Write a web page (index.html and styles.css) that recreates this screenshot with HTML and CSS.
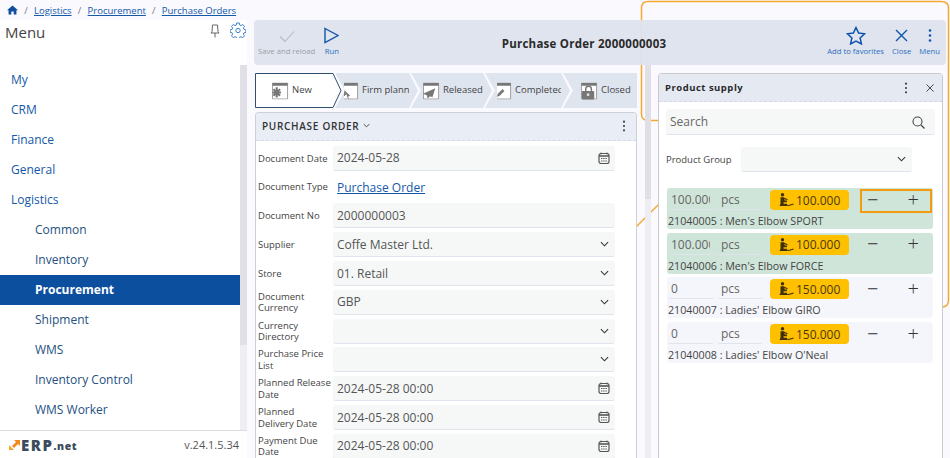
FILE: index.html
```html
<!DOCTYPE html>
<html lang="en">
<head>
  <meta charset="UTF-8" />
  <title>Purchase Order 2000000003</title>
  <link rel="stylesheet" href="styles.css">
</head>
<body>
  <svg class="sprite" xmlns="http://www.w3.org/2000/svg">
    <symbol id="i-cal" viewBox="0 0 12 12">
      <path d="M3 .5v2M9 .5v2" stroke="#555" fill="none"/>
      <rect x="1" y="1.5" width="10" height="10" rx="2" fill="none" stroke="#555" stroke-width="1.2"/>
      <path d="M1 4h10" stroke="#555" stroke-width="1.6"/>
      <path d="M3 6.5h6M3 9h6" stroke="#555" stroke-dasharray="1.4 .8"/>
    </symbol>
    <symbol id="i-down" viewBox="0 0 10 6">
      <path d="M1 1l4 4 4-4" fill="none" stroke="#333" stroke-width="1.2"/>
    </symbol>
    <symbol id="i-dots" viewBox="0 0 4 14">
      <circle cx="2" cy="2" r="1.3"/><circle cx="2" cy="7" r="1.3"/><circle cx="2" cy="12" r="1.3"/>
    </symbol>
    <symbol id="i-page" viewBox="0 0 18 18">
      <path d="M.5.5h16v17H.5z" fill="#fff" stroke="#999"/>
      <path d="M.5.5h16v3H.5z" fill="#777"/>
    </symbol>
    <symbol id="i-stock" viewBox="0 0 15 14">
      <circle cx="3.500" cy="1.800" r="1.700" fill="#3f3208"/>
      <path d="M1.500 4.200h3.600l.6 3.300h2.200v1.800H4.600v1.500h3.200l1 2.200H.5l1-2.200z" fill="#3f3208"/>
      <path d="M5 5.200l3.500 1.600M8.500 12.500c2 0 3-.5 6-1.500" fill="none" stroke="#3f3208" stroke-width="1.100"/>
    </symbol>
  </svg>

  <!-- callout drawn behind the panels -->
  <svg class="callout" viewBox="0 0 950 458" xmlns="http://www.w3.org/2000/svg">
    <path d="M660 120.500H648Q641.500 120.500 641.500 114V8Q641.500 1.500 648 1.500H941Q948.500 1.500 948.500 8V300Q948.500 307 942 307" fill="none" stroke="#f6a82f" stroke-width="1.500"/>
    <path d="M634 229L660 203" fill="none" stroke="#f6a82f" stroke-width="1.500"/>
  </svg>

  <div class="app">
    <div class="crumbs">
      <svg class="home" viewBox="0 0 12 10"><path d="M6 0L0 5.400h1.700V10h3V6.700h2.600V10h3V5.400H12z" fill="#0f4f9e"/></svg>
      <span class="sep">/</span><a href="#">Logistics</a>
      <span class="sep">/</span><a href="#">Procurement</a>
      <span class="sep">/</span><a href="#">Purchase Orders</a>
    </div>

    <div class="workspace">
      <aside class="sidebar">
        <div class="menu-head">
          <span class="menu-title">Menu</span>
          <svg class="pin" viewBox="0 0 10 14"><path d="M2.500 1h5l.5 6.500 1 1.500H1l1-1.500zM5 9v4.500" fill="none" stroke="#666"/></svg>
          <svg class="gear" viewBox="0 0 16 16"><path d="M6.700 1h2.600l.4 2 1.300.6 1.800-1.100 1.700 1.900-1.100 1.700.5 1.300 2 .5v2.500l-2 .5-.5 1.300 1.100 1.700-1.700 1.800-1.800-1-1.300.5-.4 2H6.700l-.4-2-1.300-.5-1.800 1-1.700-1.800 1.100-1.700-.5-1.300-2-.5V7.900l2-.5.500-1.300L1.500 4.400l1.700-1.900L5 3.600l1.300-.6z" fill="none" stroke="#2c76c4" stroke-width=".9"/><circle cx="8" cy="8.500" r="2.200" fill="none" stroke="#2c76c4" stroke-width=".9"/></svg>
        </div>
        <div class="menu-scroll">
          <nav class="menu">
            <a class="top" href="#">My</a>
            <a class="top" href="#">CRM</a>
            <a class="top" href="#">Finance</a>
            <a class="top" href="#">General</a>
            <a class="top" href="#">Logistics</a>
            <a href="#">Common</a>
            <a href="#">Inventory</a>
            <a class="active" href="#">Procurement</a>
            <a href="#">Shipment</a>
            <a href="#">WMS</a>
            <a href="#">Inventory Control</a>
            <a href="#">WMS Worker</a>
          </nav>
          <div class="menu-bar"><div class="menu-thumb"></div></div>
        </div>
        <div class="side-foot">
          <span class="logo">
            <svg viewBox="0 0 11 10"><path d="M5 0h6v6L9 4 5 8 3 6l4-4z" fill="#f08a1d"/><path d="M0 5l5 5H0z" fill="#f6a52e"/></svg>
            <b>ERP</b><b class="net">.net</b>
          </span>
          <span class="version">v.24.1.5.34</span>
        </div>
      </aside>

      <main class="main">
        <header class="toolbar">
          <div class="tools">
            <div class="tool off">
              <svg class="t-check" viewBox="0 0 16 12"><path d="M1 6l5 5L15 1" fill="none" stroke="#b4b9c2" stroke-width="1.100"/></svg>
              <span>Save and reload</span>
            </div>
            <div class="tool">
              <svg class="t-run" viewBox="0 0 15 16"><path d="M1 1l13 7-13 7z" fill="none" stroke="#0f55ad" stroke-width="1.400"/></svg>
              <span>Run</span>
            </div>
          </div>
          <h1 class="doc-title">Purchase Order 2000000003</h1>
          <div class="tools right">
            <div class="tool">
              <svg class="t-star" viewBox="0 0 20 19"><path d="M10 1.500l2.600 5.600 6 .7-4.500 4.100 1.300 6L10 15l-5.400 2.900 1.300-6L1.400 7.800l6-.7z" fill="none" stroke="#0f55ad" stroke-width="1.500"/></svg>
              <span>Add to favorites</span>
            </div>
            <div class="tool">
              <svg class="t-close" viewBox="0 0 13 13"><path d="M1 1l11 11M12 1L1 12" fill="none" stroke="#0f55ad" stroke-width="1.400"/></svg>
              <span>Close</span>
            </div>
            <div class="tool">
              <svg class="t-dots" viewBox="0 0 4 14" fill="#0f55ad"><use href="#i-dots"/></svg>
              <span>Menu</span>
            </div>
          </div>
        </header>

        <div class="content">
          <section class="doc">
            <div class="steps">
              <div class="step current">
                <svg class="step-edge" viewBox="0 0 87 35" preserveAspectRatio="none"><path d="M.5.500H78L86 17.500 78 34.500H.5z" fill="#fff" stroke="#2f4f70"/></svg>
                <span class="step-icon">
                  <svg viewBox="0 0 18 18"><use href="#i-page"/><path d="M5 5v11M.5 10.500h9M1.500 7l7 7M8.500 7l-7 7" stroke="#777" stroke-width="2.200"/></svg>
                </span>
                <span class="step-label">New</span>
              </div>
              <div class="step s2">
                <span class="step-icon small">
                  <svg viewBox="0 0 18 18"><use href="#i-page"/><path d="M2 8l6 6-2.500 .5L7 17M2 8l.5 6 2-2" fill="#777" stroke="#777"/></svg>
                </span>
                <span class="step-label">Firm planned</span>
              </div>
              <div class="step s3">
                <span class="step-icon">
                  <svg viewBox="0 0 18 18"><use href="#i-page"/><path d="M13 6L0 12l4 1.500L5 17l2.500-2.500 2.500 1z" fill="#777"/></svg>
                </span>
                <span class="step-label">Released</span>
              </div>
              <div class="step s4">
                <span class="step-icon small">
                  <svg viewBox="0 0 18 18"><use href="#i-page"/><path d="M2 15l1-3 5-5 2 2-5 5z" fill="#777"/></svg>
                </span>
                <span class="step-label">Completed</span>
              </div>
              <div class="step s5">
                <span class="step-icon">
                  <svg viewBox="0 0 18 18"><use href="#i-page"/><path d="M5 9V7a3 3 0 016 0v2" fill="none" stroke="#777" stroke-width="1.500"/><rect x="1" y="9" width="13" height="9" rx="1" fill="#777"/><circle cx="7.500" cy="13" r="1.500" fill="#ddd"/></svg>
                </span>
                <span class="step-label">Closed</span>
              </div>
            </div>

            <div class="card">
              <div class="card-head">
                <span class="card-title">PURCHASE ORDER</span>
                <svg class="card-caret" viewBox="0 0 10 6"><use href="#i-down"/></svg>
                <svg class="dots" viewBox="0 0 4 14"><use href="#i-dots"/></svg>
              </div>
              <div class="form">
                <div class="row"><label>Document Date</label><div class="field">2024-05-28<svg class="cal"><use href="#i-cal"/></svg></div></div>
                <div class="row"><label>Document Type</label><div class="plain"><a href="#">Purchase Order</a></div></div>
                <div class="row"><label>Document No</label><div class="field">2000000003</div></div>
                <div class="row"><label>Supplier</label><div class="field">Coffe Master Ltd.<svg class="caret"><use href="#i-down"/></svg></div></div>
                <div class="row"><label>Store</label><div class="field">01. Retail<svg class="caret"><use href="#i-down"/></svg></div></div>
                <div class="row"><label>Document Currency</label><div class="field">GBP<svg class="caret"><use href="#i-down"/></svg></div></div>
                <div class="row"><label>Currency Directory</label><div class="field"><svg class="caret"><use href="#i-down"/></svg></div></div>
                <div class="row"><label>Purchase Price List</label><div class="field"><svg class="caret"><use href="#i-down"/></svg></div></div>
                <div class="row"><label>Planned Release Date</label><div class="field">2024-05-28 00:00<svg class="cal"><use href="#i-cal"/></svg></div></div>
                <div class="row"><label>Planned<br>Delivery Date</label><div class="field">2024-05-28 00:00<svg class="cal"><use href="#i-cal"/></svg></div></div>
                <div class="row"><label>Payment Due Date</label><div class="field">2024-05-28 00:00<svg class="cal"><use href="#i-cal"/></svg></div></div>
              </div>
            </div>
          </section>

          <div class="splitter"><div class="splitter-thumb"></div></div>

          <section class="panel">
            <div class="panel-head">
              <span class="panel-title">Product supply</span>
              <svg class="dots" viewBox="0 0 4 14"><use href="#i-dots"/></svg>
              <svg class="panel-x" viewBox="0 0 9 9"><path d="M.5.500l8 8M8.500.5l-8 8" fill="none" stroke="#333"/></svg>
            </div>
            <div class="panel-body">
              <div class="search">
                <span>Search</span>
                <svg viewBox="0 0 13 13"><circle cx="5.500" cy="5.500" r="4.500" fill="none" stroke="#444" stroke-width="1.100"/><path d="M9 9l3.500 3.500" stroke="#444" stroke-width="1.300"/></svg>
              </div>
              <div class="group">
                <label>Product Group</label>
                <div class="group-select"><svg class="caret"><use href="#i-down"/></svg></div>
              </div>
              <div class="items">
                <div class="item added">
                  <div class="item-line">
                    <div class="qty"><span>100.000</span></div>
                    <div class="unit">pcs</div>
                    <div class="stock"><svg><use href="#i-stock"/></svg>100.000</div>
                    <div class="steppers marked"><span>&minus;</span><span>+</span></div>
                  </div>
                  <div class="item-name">21040005 : Men's Elbow SPORT</div>
                </div>
                <div class="item added">
                  <div class="item-line">
                    <div class="qty"><span>100.000</span></div>
                    <div class="unit">pcs</div>
                    <div class="stock"><svg><use href="#i-stock"/></svg>100.000</div>
                    <div class="steppers"><span>&minus;</span><span>+</span></div>
                  </div>
                  <div class="item-name">21040006 : Men's Elbow FORCE</div>
                </div>
                <div class="item">
                  <div class="item-line">
                    <div class="qty"><span>0</span></div>
                    <div class="unit">pcs</div>
                    <div class="stock"><svg><use href="#i-stock"/></svg>150.000</div>
                    <div class="steppers"><span>&minus;</span><span>+</span></div>
                  </div>
                  <div class="item-name">21040007 : Ladies' Elbow GIRO</div>
                </div>
                <div class="item">
                  <div class="item-line">
                    <div class="qty"><span>0</span></div>
                    <div class="unit">pcs</div>
                    <div class="stock"><svg><use href="#i-stock"/></svg>150.000</div>
                    <div class="steppers"><span>&minus;</span><span>+</span></div>
                  </div>
                  <div class="item-name">21040008 : Ladies' Elbow O'Neal</div>
                </div>
              </div>
            </div>
          </section>
        </div>
      </main>
    </div>
  </div>
</body>
</html>
```

FILE: styles.css
```css
* {
  box-sizing: border-box;
}
html, body {
  margin: 0;
  height: 100%;
}
body {
  width: 950px;
  height: 458px;
  overflow: hidden;
  position: relative;
  background: #f9f9fe;
  font-family: "Open Sans", "Liberation Sans", sans-serif;
  color: #444;
}
a {
  color: #1458a8;
}
.sprite {
  display: none;
}
.callout {
  position: absolute;
  top: 0;
  left: 0;
  width: 950px;
  height: 458px;
}
.app {
  position: relative;
  display: flex;
  flex-direction: column;
  height: 458px;
}

/* breadcrumb */
.crumbs {
  height: 20px;
  display: flex;
  align-items: center;
  padding-left: 7px;
  font-size: 9.500px;
}
.home {
  width: 11px;
  height: 10px;
}
.sep {
  color: #777;
  margin: 0 6.250px;
}

.workspace {
  flex: 1;
  display: flex;
  min-height: 0;
}

/* side menu */
.sidebar {
  width: 247px;
  background: #fff;
  display: flex;
  flex-direction: column;
  flex: none;
}
.menu-head {
  height: 45px;
  display: flex;
  align-items: flex-start;
  padding: 2px 1px 0 5px;
}
.menu-title {
  font-size: 15px;
  line-height: 20px;
  flex: 1;
  color: #444;
}
.pin {
  width: 10px;
  height: 14px;
  margin: 2px 10px 0 0;
}
.gear {
  width: 16px;
  height: 16px;
}
.menu-scroll {
  flex: 1;
  display: flex;
  min-height: 0;
  overflow: hidden;
}
.menu {
  flex: 1;
  display: flex;
  flex-direction: column;
}
.menu a {
  height: 30px;
  flex: none;
  padding-left: 35px;
  font-size: 12px;
  line-height: 29px;
  color: #24517f;
  text-decoration: none;
}
.menu a.top {
  padding-left: 11px;
  color: #1458a8;
}
.menu a.active {
  background: #0c4f9f;
  color: #fff;
  font-weight: 700;
}
.menu-bar {
  width: 7px;
  background: #eeeef3;
}
.menu-thumb {
  height: 280px;
  background: #e0e0e6;
}
.side-foot {
  height: 28px;
  flex: none;
  border-top: 1px solid #dedee2;
  display: flex;
  align-items: center;
  justify-content: space-between;
  padding: 0 8px 0 9px;
}
.logo {
  display: flex;
  align-items: center;
  color: #3a4b5c;
  font-size: 15px;
  line-height: 14px;
  font-weight: 800;
  letter-spacing: 1.500px;
}
.logo b {
  font-weight: 800;
}
.logo svg {
  width: 11px;
  height: 10px;
  margin-right: 1px;
}
.logo .net {
  font-size: 10.500px;
  letter-spacing: .6px;
  margin-top: 2px;
}
.version {
  font-size: 11px;
  color: #555;
}

/* document area */
.main {
  flex: 1;
  min-width: 0;
  padding: 0 4px 0 7px;
  display: flex;
  flex-direction: column;
}
.toolbar {
  height: 45px;
  flex: none;
  background: rgba(222, 227, 238, .95);
  border-radius: 4px;
  display: flex;
  align-items: flex-start;
  justify-content: space-between;
  padding: 6px 6px 0 4px;
  position: relative;
}
.tools {
  display: flex;
  gap: 9px;
  width: 170px;
}
.tools.right {
  justify-content: flex-end;
  gap: 8px;
  width: 200px;
}
.tool {
  display: flex;
  flex-direction: column;
  align-items: center;
  font-size: 7.700px;
  line-height: 10px;
  color: #2c6fbd;
  white-space: nowrap;
}
.tool svg {
  height: 19px;
  display: block;
  margin-bottom: 1px;
}
.tool.off {
  color: #9a9ea6;
}
.t-check {
  width: 16px;
  padding: 4px 0 2px;
}
.t-run {
  width: 15px;
}
.t-star {
  width: 20px;
}
.t-close {
  width: 13px;
  padding: 3px 0;
}
.t-dots {
  width: 4px;
  padding: 1px 0;
}
.doc-title {
  margin: 10px 0 0 0;
  font-size: 11.500px;
  line-height: 16px;
  font-weight: 700;
  color: #2a2a2a;
  letter-spacing: .25px;
}

.content {
  flex: 1;
  min-height: 0;
  display: flex;
  margin-top: 8px;
}
.doc {
  width: 382px;
  margin-left: 1px;
  flex: none;
  display: flex;
  flex-direction: column;
  position: relative;
}
.splitter {
  width: 6px;
  margin: -8px 7px 0 8px;
  flex: none;
  background: #ededf3;
  position: relative;
}
.splitter-thumb {
  height: 134px;
  background: #dfdfe5;
}

/* status steps */
.steps {
  height: 35px;
  flex: none;
  display: flex;
  font-size: 9.500px;
  color: #444;
}
.step {
  position: relative;
  height: 35px;
  display: flex;
  align-items: center;
  background: #dfe5ef;
  clip-path: polygon(0 0, calc(100% - 9px) 0, 100% 50%, calc(100% - 9px) 100%, 0 100%, 10px 50%);
  margin-left: -7px;
  flex: none;
}
.step-icon {
  position: relative;
  flex: none;
  width: 17px;
  height: 18px;
  margin-right: 3px;
}
.step-icon svg {
  width: 17px;
  height: 18px;
  display: block;
}
.step-icon.small {
  width: 15px;
  overflow: hidden;
}
.step-icon.small svg {
  margin-left: -2px;
}
.step-label {
  position: relative;
  flex: 1;
  overflow: hidden;
  white-space: nowrap;
  line-height: 14px;
  margin-top: -2px;
}
.step.current {
  width: 87px;
  margin-left: 0;
  padding: 0 9px 0 17px;
  background: none;
  clip-path: none;
}
.step-edge {
  position: absolute;
  top: 0;
  left: 0;
  width: 87px;
  height: 35px;
}
.s2 {
  width: 83px;
  padding: 0 9px;
}
.s3 {
  width: 81px;
  padding: 0 6px 0 12px;
}
.s4 {
  width: 85px;
  padding: 0 9px 0 12px;
}
.s5 {
  width: 74px;
  padding: 0 4px 0 18px;
  clip-path: polygon(0 0, 100% 0, 100% 100%, 0 100%, 10px 50%);
}

/* form card */
.card {
  flex: 1;
  min-height: 0;
  margin-top: 4px;
  background: #fff;
  border: 1px solid #cfcfd6;
  border-bottom: 0;
  border-radius: 4px 4px 0 0;
  overflow: hidden;
}
.card-head {
  height: 28px;
  background: #e9edf6;
  border-bottom: 1px dashed #d5d9e6;
  display: flex;
  align-items: center;
  padding: 0 10px 2px 6px;
}
.card-title {
  font-size: 10px;
  letter-spacing: .7px;
  color: #333;
  font-weight: 600;
}
.card-caret {
  width: 7px;
  height: 5px;
  margin-left: 4px;
}
.dots {
  width: 4px;
  height: 12px;
  margin-left: auto;
  fill: #444;
}
.form {
  padding: 3px 21px 0 2px;
}
.row {
  display: flex;
  align-items: center;
  height: 28.800px;
}
.row label {
  width: 75px;
  flex: none;
  font-size: 9.500px;
  line-height: 11.500px;
  color: #444;
}
.field {
  flex: 1;
  height: 25px;
  background: #f6f8f8;
  border-bottom: 1px solid #dfe3ec;
  border-radius: 3px;
  padding: 0 5px 0 4px;
  display: flex;
  align-items: center;
  font-size: 12px;
  color: #555;
  position: relative;
}
.plain {
  flex: 1;
  padding: 0 4px;
  font-size: 12px;
}
.cal {
  width: 12px;
  height: 12px;
  margin-left: auto;
  flex: none;
}
.caret {
  width: 9px;
  height: 6px;
  margin-left: auto;
  margin-right: 1.500px;
  flex: none;
}

/* product supply panel */
.panel {
  flex: 1;
  min-width: 0;
  background: #fff;
  border: 1px solid #c9c9cf;
  border-bottom: 0;
  border-radius: 4px 4px 0 0;
  position: relative;
  margin-right: 3px;
}
.panel-head {
  height: 28px;
  background: #e5e9f2;
  border-bottom: 1px dashed #d5d9e6;
  display: flex;
  align-items: center;
  padding: 0 8px 0 6px;
}
.panel-title {
  font-size: 9.500px;
  font-weight: 700;
  letter-spacing: .5px;
  color: #2a2a2a;
}
.panel-head .dots {
  margin-right: 18px;
}
.panel-x {
  width: 8px;
  height: 8px;
}
.panel-body {
  padding: 7px 7px 0 7px;
}
.search {
  height: 26px;
  background: #f6f8f8;
  border-bottom: 1px solid #dfe3ec;
  border-radius: 3px;
  padding: 0 10px 0 4px;
  display: flex;
  align-items: center;
  justify-content: space-between;
  font-size: 12px;
  color: #666;
}
.search svg {
  width: 13px;
  height: 13px;
  margin-top: 2px;
}
.group {
  display: flex;
  align-items: center;
  margin-top: 12px;
  height: 25px;
}
.group label {
  width: 75px;
  flex: none;
  font-size: 9.500px;
  color: #444;
}
.group-select {
  width: 171px;
  height: 25px;
  background: #f6f8f8;
  border-bottom: 1px solid #dfe3ec;
  border-radius: 3px;
  display: flex;
  align-items: center;
  padding-right: 5px;
}
.items {
  margin: 16px 2px 0 1px;
  display: flex;
  flex-direction: column;
  gap: 3.700px;
}
.item {
  height: 41px;
  background: #f5f6fb;
  border-radius: 3px;
  color: #444;
}
.item.added {
  background: #cfe5da;
}
.item-line {
  display: flex;
  height: 26px;
  padding: 2px 0 0 1px;
}
.qty {
  width: 46px;
  height: 20px;
  padding-left: 3px;
  border-bottom: 1px solid #dfe3ec;
  border-radius: 3px;
  font-size: 12px;
  line-height: 19px;
  color: #666;
}
.qty span {
  display: block;
  width: 39px;
  overflow: hidden;
  white-space: nowrap;
}
.unit {
  width: 46px;
  height: 20px;
  margin-left: 3px;
  padding-left: 4px;
  border-bottom: 1px solid #dfe3ec;
  border-radius: 3px;
  font-size: 12px;
  line-height: 19px;
  color: #666;
}
.stock {
  width: 79px;
  height: 20px;
  margin-left: 7px;
  background: #ffc000;
  border-radius: 4px;
  display: flex;
  align-items: center;
  padding-left: 9px;
  font-size: 12px;
  color: #4a3a10;
}
.stock svg {
  width: 15px;
  height: 14px;
  margin-right: 2px;
}
.steppers {
  width: 72px;
  height: 24px;
  margin: -1px 0 0 11px;
  display: flex;
  justify-content: space-between;
  align-items: center;
  padding: 0 11px 3px 5px;
  font-size: 20px;
  font-weight: 300;
  line-height: 18px;
  color: #333;
  border: 2.500px solid transparent;
}
.steppers.marked {
  border-color: #f39c12;
}
.item-name {
  padding: 1px 0 0 1px;
  font-size: 10.700px;
  line-height: 13px;
}
```
